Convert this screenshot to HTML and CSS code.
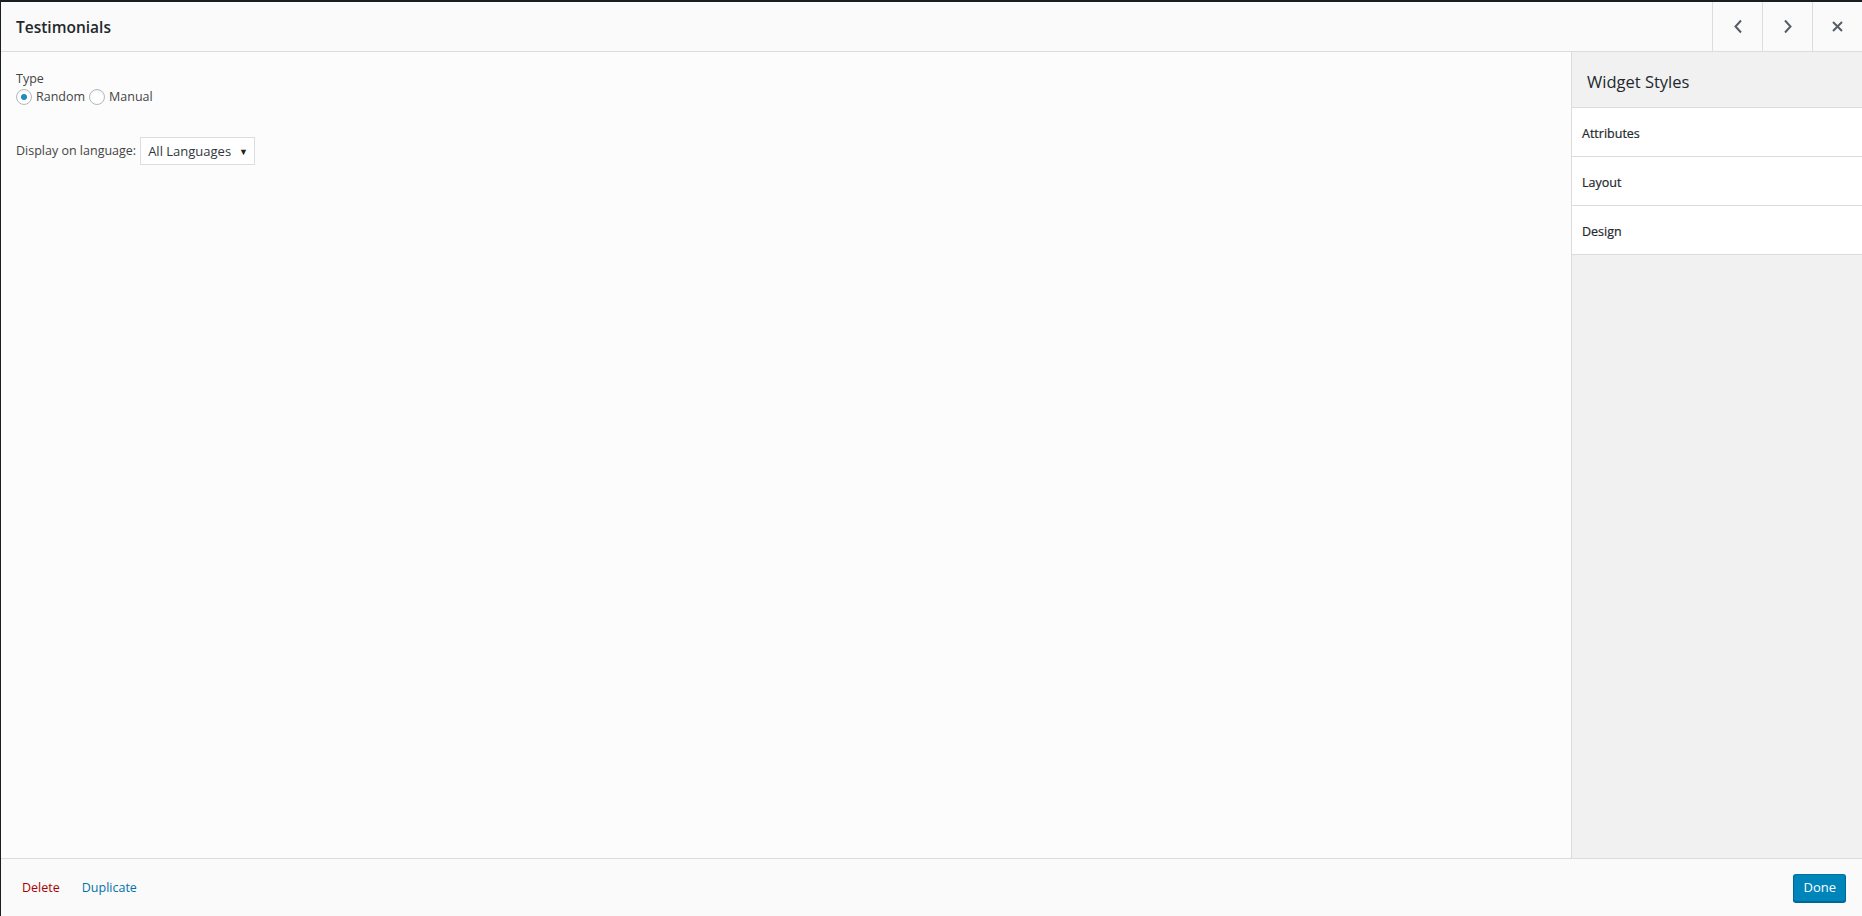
FILE: index.html
```html
<!DOCTYPE html>
<html lang="en">

<head>
    <meta charset="UTF-8">
    <meta name="viewport" content="width=device-width, initial-scale=1.0">
    <title>Testimonials</title>
    <link rel="stylesheet" href="styles.css">
</head>

<body>
    <div class="dialog">
        <div class="dialog-title">
            <h3 class="title-text">Testimonials</h3>
            <div class="nav-buttons">
                <a class="nav-btn" href="#" title="Previous">
                    <svg width="10" height="15" viewBox="0 0 10 15"><path d="M8 1.5 2.5 7.5 8 13.5" fill="none" stroke="#555d66" stroke-width="2"/></svg>
                </a>
                <a class="nav-btn" href="#" title="Next">
                    <svg width="10" height="15" viewBox="0 0 10 15"><path d="M2 1.5 7.5 7.5 2 13.5" fill="none" stroke="#555d66" stroke-width="2"/></svg>
                </a>
                <a class="nav-btn" href="#" title="Close">
                    <svg width="11" height="11" viewBox="0 0 11 11"><path d="M1 1 10 10M10 1 1 10" fill="none" stroke="#555d66" stroke-width="2"/></svg>
                </a>
            </div>
        </div>

        <div class="dialog-body">
            <div class="widget-form">
                <div class="field">
                    <label class="field-label">Type</label>
                    <div class="radio-row">
                        <label class="radio"><span class="radio-circle checked"></span>Random</label>
                        <label class="radio"><span class="radio-circle"></span>Manual</label>
                    </div>
                </div>

                <div class="field lang-field">
                    <label class="field-label">Display on language:</label>
                    <div class="select-box">All Languages <span class="select-arrow">&#9660;</span></div>
                </div>
            </div>

            <div class="sidebar">
                <h3 class="sidebar-title">Widget Styles</h3>
                <div class="style-section">Attributes</div>
                <div class="style-section">Layout</div>
                <div class="style-section">Design</div>
            </div>
        </div>

        <div class="dialog-footer">
            <div class="footer-links">
                <a href="#" class="link-delete">Delete</a>
                <a href="#" class="link-duplicate">Duplicate</a>
            </div>
            <button class="btn-done">Done</button>
        </div>
    </div>
</body>

</html>
```

FILE: styles.css
```css
body {
    margin: 0;
    padding: 2px 0 0 1px;
    background-color: #191e23;
    font-family: 'Open Sans', 'Noto Sans', sans-serif;
    font-size: 12.5px;
    color: #444;
    height: 100vh;
    box-sizing: border-box;
    overflow: hidden;
}

.dialog {
    display: flex;
    flex-direction: column;
    height: 914px;
    background-color: #fcfcfc;
}

.dialog-title {
    display: flex;
    justify-content: space-between;
    align-items: stretch;
    height: 49px;
    background-color: #fafafa;
    border-bottom: 1px solid #dcdcdc;
}

.title-text {
    margin: 0;
    padding-left: 15px;
    font-size: 15.5px;
    font-weight: 600;
    color: #23282d;
    line-height: 51px;
}

.nav-buttons {
    display: flex;
}

.nav-btn {
    display: flex;
    align-items: center;
    justify-content: center;
    width: 49px;
    border-left: 1px solid #dcdcdc;
}

.dialog-body {
    flex: 1;
    display: flex;
    min-height: 0;
}

.widget-form {
    flex: 1;
    padding: 18px 15px;
}

.field-label {
    display: block;
    line-height: 18px;
}

.radio-row {
    display: flex;
    gap: 4px;
    line-height: 18px;
}

.radio {
    display: flex;
    align-items: center;
    gap: 4px;
}

.radio-circle {
    width: 14px;
    height: 14px;
    border: 1px solid #b4b9be;
    border-radius: 50%;
    background-color: #fff;
    box-shadow: inset 0 1px 2px rgba(0, 0, 0, 0.07);
    display: flex;
    align-items: center;
    justify-content: center;
}

.radio-circle.checked::after {
    content: "";
    width: 6px;
    height: 6px;
    border-radius: 50%;
    background-color: #1e8cbe;
}

.lang-field {
    display: flex;
    align-items: center;
    gap: 4px;
    margin-top: 31px;
}

.lang-field .field-label {
    display: inline;
}

.select-box {
    display: flex;
    align-items: center;
    height: 26px;
    padding: 0 6px 0 7px;
    border: 1px solid #ddd;
    background-color: #fff;
    color: #32373c;
    font-size: 13px;
    gap: 8px;
}

.select-arrow {
    font-size: 9px;
    color: #222;
}

.sidebar {
    width: 290px;
    background-color: #f1f1f1;
    border-left: 1px solid #dcdcdc;
}

.sidebar-title {
    margin: 0;
    height: 53px;
    line-height: 55px;
    padding: 2px 0 0 15px;
    font-size: 16.5px;
    font-weight: 500;
    color: #23282d;
    border-bottom: 1px solid #dcdcdc;
}

.style-section {
    height: 46px;
    line-height: 48px;
    padding: 2px 0 0 10px;
    background-color: #fff;
    border-bottom: 1px solid #dcdcdc;
    font-weight: 500;
    font-size: 12.5px;
    color: #23282d;
    -webkit-text-stroke: 0.2px #23282d;
}

.dialog-footer {
    display: flex;
    justify-content: space-between;
    align-items: center;
    height: 57px;
    padding: 0 16px 0 21px;
    background-color: #fafafa;
    border-top: 1px solid #dcdcdc;
}

.footer-links {
    display: flex;
    gap: 22px;
}

.footer-links a {
    text-decoration: none;
}

.link-delete {
    color: #a00;
}

.link-duplicate {
    color: #0073aa;
}

.btn-done {
    height: 28px;
    padding: 0 9px 1px;
    font-family: inherit;
    font-size: 13px;
    color: #fff;
    background-color: #0085ba;
    border: 1px solid;
    border-color: #0073aa #006799 #006799;
    border-radius: 3px;
    box-shadow: 0 1px 0 #006799;
    cursor: pointer;
}
```
